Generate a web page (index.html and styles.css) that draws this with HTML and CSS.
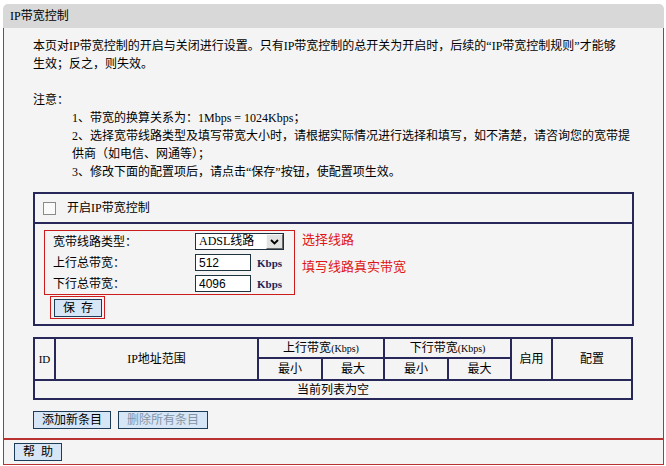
FILE: index.html
```html
<!DOCTYPE html>
<html lang="zh-CN">
<head>
    <meta charset="UTF-8">
    <title>IP带宽控制</title>
    <link rel="stylesheet" href="styles.css">
</head>
<body>
<div class="panel">
    <div class="title">IP带宽控制</div>
    <div class="content">
        <p class="intro">本页对IP带宽控制的开启与关闭进行设置。只有IP带宽控制的总开关为开启时，后续的“IP带宽控制规则”才能够<br>生效；反之，则失效。</p>
        <p class="notice">注意：</p>
        <div class="notes">
            1、带宽的换算关系为：1Mbps = 1024Kbps；<br>
            2、选择宽带线路类型及填写带宽大小时，请根据实际情况进行选择和填写，如不清楚，请咨询您的宽带提<br>
            供商（如电信、网通等）；<br>
            3、修改下面的配置项后，请点击“保存”按钮，使配置项生效。
        </div>

        <div class="frame">
            <div class="frame-top">
                <input type="checkbox" class="check" id="enable">
                <label for="enable">开启IP带宽控制</label>
            </div>
            <div class="frame-body">
                <div class="settings-row">
                    <div class="mark settings">
                        <span class="lbl">宽带线路类型：</span>
                        <div class="select">
                            <span class="select-text">ADSL线路</span>
                            <span class="arrow">
                                <svg width="9" height="6" viewBox="0 0 9 6"><path d="M1 1 L4.5 4.5 L8 1" fill="none" stroke="#000" stroke-width="1.8"/></svg>
                            </span>
                        </div>
                        <span class="lbl">上行总带宽：</span>
                        <input type="text" class="txt" value="512">
                        <span class="unit">Kbps</span>
                        <span class="lbl">下行总带宽：</span>
                        <input type="text" class="txt" value="4096">
                        <span class="unit">Kbps</span>
                    </div>
                    <div class="hints">
                        <div>选择线路</div>
                        <div class="hint2">填写线路真实带宽</div>
                    </div>
                </div>
                <div class="save-wrap">
                    <div class="mark save-mark">
                        <button class="btn save">保 存</button>
                    </div>
                </div>
            </div>
        </div>

        <table class="rules">
            <colgroup>
                <col style="width:21px">
                <col style="width:203px">
                <col style="width:64px">
                <col style="width:62px">
                <col style="width:64px">
                <col style="width:63px">
                <col style="width:41px">
                <col style="width:80px">
            </colgroup>
            <tr class="h1">
                <td rowspan="2" class="latin">ID</td>
                <td rowspan="2">IP地址范围</td>
                <td colspan="2">上行带宽<small>(Kbps)</small></td>
                <td colspan="2">下行带宽<small>(Kbps)</small></td>
                <td rowspan="2">启用</td>
                <td rowspan="2">配置</td>
            </tr>
            <tr class="h2">
                <td>最小</td>
                <td>最大</td>
                <td>最小</td>
                <td>最大</td>
            </tr>
            <tr class="empty">
                <td colspan="8">当前列表为空</td>
            </tr>
        </table>

        <div class="actions">
            <button class="btn">添加新条目</button>
            <button class="btn disabled">删除所有条目</button>
        </div>
    </div>
    <div class="footer">
        <button class="btn help">帮 助</button>
    </div>
</div>
</body>
</html>
```

FILE: styles.css
```css
body{
    margin: 0;
    background: #fff;
    color: #000;
    font: 12px/18px "Liberation Serif", "Noto Sans CJK SC", serif;
}
.panel{
    width: 661px;
    margin: 4px 0 0 3px;
}
.title{
    height: 24px;
    line-height: 24px;
    padding-left: 7px;
    background: #d8d8d8;
    border-radius: 5px 5px 0 0;
}
.content{
    background: #f4f4f4;
    border: 1px solid #b83232;
    border-top: none;
    padding: 9px 29px 9px 29px;
}
.intro{
    margin: 0 0 18px;
    white-space: nowrap;
}
.notice{
    margin: 0;
}
.notes{
    padding-left: 39px;
    white-space: nowrap;
}

/* switch + line settings */
.frame{
    margin-top: 11px;
    border: 2px solid #27275a;
}
.frame-top{
    height: 28px;
    display: flex;
    align-items: center;
    padding-left: 8px;
    border-bottom: 2px solid #27275a;
}
.check{
    appearance: none;
    width: 13px;
    height: 13px;
    margin: 0 11px 0 0;
    border: 1px solid #8a8a8a;
    background: #fafafa;
}
.frame-body{
    padding: 6px 0 5px 9px;
}
.settings-row{
    display: flex;
    align-items: flex-start;
}
.mark{
    border: 1px solid #cc1c1c;
}
.settings{
    display: grid;
    grid-template-columns: 142px 56px 33px;
    grid-auto-rows: 21px;
    align-items: center;
    padding: 0 10px 0 8px;
}
.select{
    grid-column: 2 / 4;
    height: 17px;
    box-sizing: border-box;
    border: 1px solid #1f2f3f;
    background: #fff;
    display: flex;
    align-items: center;
    justify-content: space-between;
}
.select-text{
    padding-left: 3px;
    line-height: 15px;
}
.arrow{
    width: 17px;
    height: 15px;
    box-sizing: border-box;
    background: #e2e2e2;
    border: 1px solid;
    border-color: #f8f8f8 #6a6a6a #6a6a6a #f8f8f8;
    display: flex;
    align-items: center;
    justify-content: center;
}
.txt{
    width: 56px;
    height: 17px;
    box-sizing: border-box;
    margin: 0;
    padding: 0 3px;
    border: 1px solid #1e3540;
    background: #fff;
    font: 12px "Liberation Sans", "Noto Sans CJK SC", sans-serif;
    color: #000;
}
.unit{
    margin-left: 6px;
    font-size: 11px;
    font-weight: bold;
    color: #1c2656;
}
.hints{
    margin-left: 7px;
    color: #e01414;
    font-size: 13px;
    line-height: 20px;
}
.hint2{
    margin-top: 7px;
}
.save-wrap{
    margin: 1px 0 0 6px;
}
.save-mark{
    display: inline-flex;
    padding: 2px 2px 1px 3px;
}

/* buttons */
.btn{
    height: 18px;
    margin: 0;
    padding: 0 8px;
    border: 1px solid #1d3c58;
    background: #d6e6f6;
    color: #000;
    font: 12px/16px "Liberation Serif", "Noto Sans CJK SC", serif;
}
.save, .help{
    width: 48px;
    padding: 0;
    word-spacing: 3px;
}
.disabled{
    color: #8494a6;
}

/* rule list */
.rules{
    margin-top: 11px;
    width: 600px;
    table-layout: fixed;
    border-collapse: collapse;
    border: 2px solid #27275a;
}
.rules td{
    border: 2px solid #27275a;
    padding: 0;
    text-align: center;
    line-height: 16px;
}
.rules small{
    font-size: 10px;
}
.rules .latin{
    font-size: 11px;
}
.h1 td{ height: 18px; }
.h2 td{ height: 20px; }
.empty td{ height: 17px; }

.actions{
    margin-top: 11px;
    display: flex;
    gap: 7px;
}

.footer{
    height: 18px;
    background: #f4f4f4;
    border: 1px solid #b83232;
    padding: 3px 10px;
}
```
